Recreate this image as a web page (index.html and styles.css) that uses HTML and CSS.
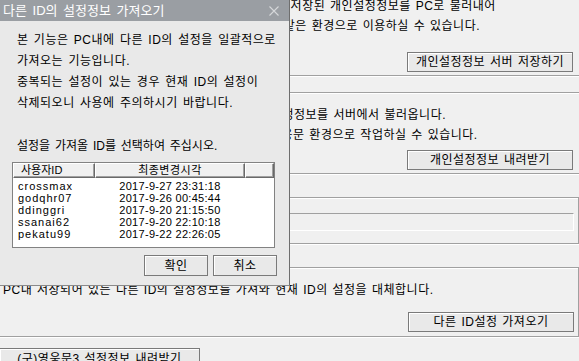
FILE: index.html
```html
<!DOCTYPE html>
<html lang="ko">
<head>
	<meta charset="UTF-8">
	<title>다른 ID의 설정정보 가져오기</title>
	<link rel="stylesheet" href="styles.css">
</head>
<body>
	<div class="screen">
		<div class="panel">
			<section class="group g1">
				<p class="line">영웅문4 사용 중 PC를 교체하거나 포맷 후 재설치 시 저장된 개인설정정보를 PC로 불러내어</p>
				<p class="line">다른 PC에서도, 기존 PC에서 사용하던 것과 똑같이 같은 환경으로 이용하실 수 있습니다.</p>
				<div class="actions"><a href="javascript:;" class="btn wide">개인설정정보 서버 저장하기</a></div>
			</section>
			<section class="group g2">
				<p class="line">영웅문4 서버에 백업해 둔, 가장 최근 날짜의, 개인설정정보를 서버에서 불러옵니다.</p>
				<p class="line">다른 PC로 교체하셔도, 기존에 쓰던 것과, 동일한 영웅문 환경으로 작업하실 수 있습니다.</p>
				<div class="actions"><a href="javascript:;" class="btn wide">개인설정정보 내려받기</a></div>
			</section>
			<section class="group g3">
				<div class="field"></div>
			</section>
			<section class="group g4">
				<p class="line">PC내 저장되어 있는 다른 ID의 설정정보를 가져와 현재 ID의 설정을 대체합니다.</p>
				<div class="actions"><a href="javascript:;" class="btn wide">다른 ID설정 가져오기</a></div>
			</section>
			<a href="javascript:;" class="btn legacy">(구)영웅문3 설정정보 내려받기</a>
		</div>

		<div class="dialog">
			<div class="titlebar">
				<span class="title">다른 ID의 설정정보 가져오기</span>
				<svg class="close" width="10" height="10" viewBox="0 0 10 10">
					<path d="M0.5 0.5 L9.5 9.5 M9.5 0.5 L0.5 9.5" stroke="#d6d8da" stroke-width="1.1" fill="none"/>
				</svg>
			</div>
			<div class="dlg-body">
				<p class="msg">본 기능은 PC내에 다른 ID의 설정을 일괄적으로<br>가져오는 기능입니다.<br>중복되는 설정이 있는 경우 현재 ID의 설정이<br>삭제되오니 사용에 주의하시기 바랍니다.</p>
				<p class="msg ask">설정을 가져올 ID를 선택하여 주십시오.</p>
				<div class="list">
					<div class="head">
						<span class="hc c1">사용자ID</span>
						<span class="hc c2">최종변경시각</span>
						<span class="hc c3"></span>
					</div>
					<div class="rows">
						<div class="row"><span class="c1">crossmax</span><span class="c2">2017-9-27 23:31:18</span></div>
						<div class="row"><span class="c1">godqhr07</span><span class="c2">2017-9-26 00:45:44</span></div>
						<div class="row"><span class="c1">ddinggri</span><span class="c2">2017-9-20 21:15:50</span></div>
						<div class="row"><span class="c1">ssanai62</span><span class="c2">2017-9-20 22:10:18</span></div>
						<div class="row"><span class="c1">pekatu99</span><span class="c2">2017-9-22 22:26:05</span></div>
					</div>
				</div>
				<div class="dlg-buttons">
					<a href="javascript:;" class="btn small">확인</a>
					<a href="javascript:;" class="btn small">취소</a>
				</div>
			</div>
		</div>
	</div>
</body>
</html>
```

FILE: styles.css
```css
		*{
			box-sizing: border-box;
		}

		body{
			margin: 0;
			background: #f0f0f0;
			font-family: "Liberation Sans", "Noto Sans CJK KR", sans-serif;
			font-size: 12px;
			letter-spacing: 0.5px;
			color: #000;
		}

		.screen{
			width: 579px;
			height: 361px;
			overflow: hidden;
			position: relative;
		}

		.panel{
			width: 589px;
			margin-left: -10px;
			display: flex;
			flex-direction: column;
		}

		.group{
			border: 1px solid #a0a0a0;
			box-shadow: inset 1px 1px 0 #fff, 0 1px 0 #fff;
			padding: 0 4px 3px 12px;
		}

		.line{
			margin: 0;
			line-height: 20px;
			white-space: nowrap;
			word-spacing: 1px;
		}

		.actions{
			display: flex;
			justify-content: flex-end;
		}

		.btn{
			display: flex;
			align-items: center;
			justify-content: center;
			height: 20px;
			border: 1px solid #7a7a7a;
			background: #e9e9e9;
			box-shadow: inset 1px 1px 0 #fff;
			color: #000;
			text-decoration: none;
			line-height: 1;
			white-space: nowrap;
			word-spacing: 1px;
		}

		.wide{
			width: 166px;
		}

		.g1{
			margin-top: -4px;
			border-top: none;
			border-right: none;
			margin-right: -10px;
		}

		.g1 .actions{
			margin-top: 16px;
			margin-right: 12px;
		}

		.g2{
			margin-top: 16px;
			border-right: none;
			margin-right: -10px;
			padding-top: 12px;
		}

		.g2 .actions{
			margin-top: 5px;
			margin-right: 12px;
		}

		.g3{
			margin-top: 23px;
			padding-top: 15px;
			padding-bottom: 12px;
		}

		.field{
			height: 18px;
			border: 1px solid #a0a0a0;
			border-right-color: #fff;
			border-bottom-color: #fff;
		}

		.g4{
			margin-top: 23px;
			padding-top: 12px;
			padding-bottom: 4px;
		}

		.g4 .actions{
			margin-top: 12px;
		}

		.legacy{
			margin-top: 11px;
			margin-left: 9px;
			width: 201px;
			height: 22px;
		}

		/* 팝업 */
		.dialog{
			position: absolute;
			left: 0;
			top: 0;
			width: 290px;
			height: 286px;
			background: #e9e9e9;
			border-right: 1px solid #6e6e6e;
			border-bottom: 1px solid #8a8a8a;
		}

		.titlebar{
			height: 21px;
			background: #9a9ea3;
			display: flex;
			align-items: center;
			justify-content: space-between;
			padding: 0 10px 0 3px;
		}

		.title{
			color: #fff;
			font-size: 13px;
			line-height: 1;
			letter-spacing: 0;
			word-spacing: 2px;
		}

		.dlg-body{
			padding: 9px 0 0 12px;
		}

		.msg{
			margin: 0 0 0 5px;
			line-height: 21px;
			word-spacing: 1.5px;
		}

		.ask{
			margin-top: 22px;
			letter-spacing: 0;
		}

		.list{
			margin-top: 5px;
			width: 263px;
			height: 86px;
			background: #fff;
			border: 1px solid #828282;
			font-size: 11px;
			letter-spacing: 0;
		}

		.head{
			display: flex;
			height: 15px;
			background: #f0f0f0;
		}

		.hc{
			height: 15px;
			line-height: 13px;
			border: 1px solid #fff;
			border-right-color: #696969;
			border-bottom-color: #696969;
			box-shadow: inset -1px -1px 0 #a0a0a0;
		}

		.head .c1{
			width: 82px;
			padding-left: 7px;
		}

		.head .c2{
			width: 150px;
			text-align: center;
			letter-spacing: 0.5px;
		}

		.head .c3{
			flex: 1;
		}

		.rows{
			padding-top: 2px;
		}

		.row{
			display: flex;
			height: 12px;
			line-height: 12px;
		}

		.row .c1{
			width: 82px;
			padding-left: 5px;
			letter-spacing: 1px;
		}

		.row .c2{
			width: 150px;
			text-align: center;
			letter-spacing: 0.3px;
		}

		.dlg-buttons{
			display: flex;
			justify-content: flex-end;
			gap: 5px;
			margin-top: 7px;
			padding-right: 12px;
		}

		.small{
			width: 64px;
			height: 21px;
			font-size: 12px;
		}
```
